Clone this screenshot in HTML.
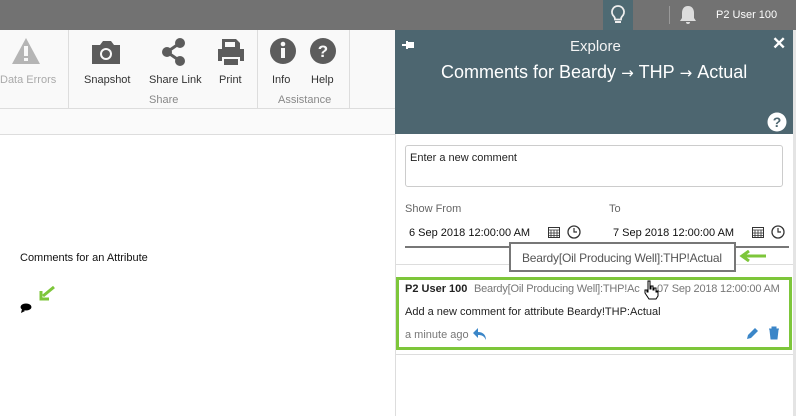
<!DOCTYPE html><html><head><style>
body{margin:0;width:796px;height:416px;overflow:hidden;background:#fff;font-family:"Liberation Sans",sans-serif;position:relative}
.a{position:absolute}
.t{font-size:11px;color:#333}
.ar{font-family:'DejaVu Sans';font-size:15px;margin:0 5px}
</style></head><body>
<div class="a" style="left:0;top:0;width:796px;height:30px;background:#727272"></div>
<div class="a" style="left:603px;top:0;width:30px;height:30px;background:#4e6a73"></div>
<svg class="a" style="left:608px;top:4px" width="20" height="22"><path d="M10 2a6 6 0 0 0-4 10.5c1 1 1 2 1 3h6c0-1 0-2 1-3A6 6 0 0 0 10 2z" fill="none" stroke="#eee" stroke-width="1.8"/><rect x="7" y="17" width="6" height="2" fill="#eee"/></svg>
<div class="a" style="left:669px;top:6px;width:1px;height:18px;background:#999"></div>
<svg class="a" style="left:678px;top:4px" width="20" height="22"><path d="M10 2c-4 0-6 3-6 7v5l-2 3h16l-2-3V9c0-4-2-7-6-7z M8 18h4a2 2 0 0 1-4 0z" fill="#ddd"/></svg>
<div class="a" style="left:716px;top:9px;font-size:11px;color:#fff">P2 User 100</div>
<div class="a" style="left:0;top:30px;width:395px;height:78px;background:#f9f9f9;border-bottom:1px solid #ddd"></div>
<div class="a" style="left:0;top:109px;width:395px;height:25px;background:#fafafa;border-bottom:1px solid #ddd"></div>
<div class="a" style="left:68px;top:30px;width:1px;height:78px;background:#ddd"></div>
<div class="a" style="left:257px;top:30px;width:1px;height:78px;background:#ddd"></div>
<div class="a" style="left:349px;top:30px;width:1px;height:78px;background:#ddd"></div>
<svg class="a" style="left:10px;top:36px" width="32" height="30"><path d="M16 2L30 28H2z" fill="#b5b5b5"/><rect x="14" y="10" width="4" height="10" fill="#f9f9f9"/><rect x="14" y="22" width="4" height="3" fill="#f9f9f9"/></svg>
<div class="a t" style="left:0;top:74px;color:#aaa">Data Errors</div>
<svg class="a" style="left:89px;top:37px" width="34" height="30"><path d="M3 8h8l3-4h8l3 4h6v19H3z" fill="#5c5c5c"/><circle cx="17" cy="17" r="6" fill="#f9f9f9"/><circle cx="17" cy="17" r="4" fill="#5c5c5c"/></svg>
<div class="a t" style="left:84px;top:74px">Snapshot</div>
<svg class="a" style="left:160px;top:37px" width="28" height="30"><circle cx="20" cy="6" r="5" fill="#5c5c5c"/><circle cx="7" cy="15" r="5" fill="#5c5c5c"/><circle cx="20" cy="24" r="5" fill="#5c5c5c"/><path d="M20 6L7 15l13 9" stroke="#5c5c5c" stroke-width="3" fill="none"/></svg>
<div class="a t" style="left:149px;top:74px">Share Link</div>
<svg class="a" style="left:216px;top:37px" width="30" height="30"><path d="M6 2h14l4 4v6H6z M2 12h26v12h-4v-4H6v4H2z M8 22h14v6H8z" fill="#5c5c5c"/><rect x="9" y="5" width="10" height="5" fill="#f9f9f9"/></svg>
<div class="a t" style="left:219px;top:74px">Print</div>
<div class="a t" style="left:149px;top:94px;color:#888">Share</div>
<svg class="a" style="left:269px;top:37px" width="28" height="28"><circle cx="14" cy="14" r="13" fill="#5c5c5c"/><rect x="12" y="11" width="4" height="10" fill="#f9f9f9"/><circle cx="14" cy="7" r="2.3" fill="#f9f9f9"/></svg>
<div class="a t" style="left:272px;top:74px">Info</div>
<svg class="a" style="left:309px;top:37px" width="28" height="28"><circle cx="14" cy="14" r="13" fill="#5c5c5c"/><text x="14" y="20" text-anchor="middle" font-size="17" font-weight="bold" fill="#f9f9f9" font-family="Liberation Sans">?</text></svg>
<div class="a t" style="left:311px;top:74px">Help</div>
<div class="a t" style="left:278px;top:94px;color:#888">Assistance</div>
<div class="a t" style="left:20px;top:252px;color:#111">Comments for an Attribute</div>
<svg class="a" style="left:18px;top:286px" width="40" height="30"><ellipse cx="8" cy="21" rx="5.5" ry="3.5" fill="#000"/><path d="M4 23l-1 4 4-2z" fill="#000"/><path d="M36 1L25 10M23 5v8h8" stroke="#7dc63a" stroke-width="3" fill="none"/></svg>
<div class="a" style="left:395px;top:30px;width:399px;height:104px;background:#4d6670"></div>
<div class="a" style="left:793px;top:30px;width:3px;height:386px;background:#e4e4e4"></div>
<div class="a" style="left:395px;top:134px;width:1px;height:282px;background:#ddd"></div>
<svg class="a" style="left:402px;top:40px" width="14" height="10"><path d="M0 4h4V1h2v8H4V6H0z M6 2h6v6H6z" fill="#fff"/></svg>
<div class="a" style="left:570px;top:38px;font-size:15px;color:#f4f4f4">Explore</div>
<div class="a" style="left:772px;top:34px;font-size:17px;font-weight:bold;color:#fff">✕</div>
<div class="a" style="left:441px;top:62px;font-size:18px;color:#fff;white-space:nowrap">Comments for Beardy<span class="ar">→</span>THP<span class="ar">→</span>Actual</div>
<svg class="a" style="left:767px;top:112px" width="20" height="20"><circle cx="10" cy="10" r="9.5" fill="#fff"/><text x="10" y="15" text-anchor="middle" font-size="14" font-weight="bold" fill="#4d6670" font-family="Liberation Sans">?</text></svg>
<div class="a" style="left:405px;top:145px;height:42px;border:1px solid #ccc;border-radius:3px;font-size:11px;color:#222;padding:6px 0 0 4px;box-sizing:border-box;width:378px">Enter a new comment</div>
<div class="a t" style="left:405px;top:203px;color:#666">Show From</div>
<div class="a t" style="left:609px;top:203px;color:#666">To</div>
<div class="a t" style="left:409px;top:227px;color:#111">6 Sep 2018 12:00:00 AM</div>
<div class="a t" style="left:613px;top:227px;color:#111">7 Sep 2018 12:00:00 AM</div>
<svg class="a" style="left:548px;top:226px" width="12" height="12"><rect x="0.5" y="1.5" width="11" height="10" fill="none" stroke="#333"/><path d="M0 4h12M3 4v7M6 4v7M9 4v7M0 7h12M0 9.5h12" stroke="#333" stroke-width="0.8"/></svg>
<svg class="a" style="left:567px;top:225px" width="14" height="14"><circle cx="7" cy="7" r="6" fill="none" stroke="#333" stroke-width="1.3"/><path d="M7 3v4h3" stroke="#333" stroke-width="1.2" fill="none"/></svg>
<svg class="a" style="left:752px;top:226px" width="12" height="12"><rect x="0.5" y="1.5" width="11" height="10" fill="none" stroke="#333"/><path d="M0 4h12M3 4v7M6 4v7M9 4v7M0 7h12M0 9.5h12" stroke="#333" stroke-width="0.8"/></svg>
<svg class="a" style="left:771px;top:225px" width="14" height="14"><circle cx="7" cy="7" r="6" fill="none" stroke="#333" stroke-width="1.3"/><path d="M7 3v4h3" stroke="#333" stroke-width="1.2" fill="none"/></svg>
<div class="a" style="left:405px;top:246px;width:384px;height:2px;background:#777"></div>
<div class="a" style="left:396px;top:264px;width:397px;height:1px;background:#ddd"></div>
<div class="a" style="left:509px;top:242px;width:227px;height:30px;border:2px solid #777;background:#fff;box-sizing:border-box;font-size:12px;color:#555;padding:7px 0 0 11px;letter-spacing:-0.2px">Beardy[Oil Producing Well]:THP!Actual</div>
<svg class="a" style="left:738px;top:250px" width="30" height="12"><path d="M28 6H6M11 1L4 6l7 5" stroke="#7dc63a" stroke-width="3" fill="none"/></svg>
<div class="a" style="left:396px;top:277px;width:396px;height:73px;border:3px solid #7dc63a;box-sizing:border-box"></div>
<div class="a" style="left:405px;top:283px;font-size:11px;color:#222;white-space:nowrap"><b>P2 User 100</b></div>
<div class="a" style="left:474px;top:283px;font-size:11px;color:#777;white-space:nowrap;letter-spacing:-0.2px">Beardy[Oil Producing Well]:THP!Ac</div>
<div class="a" style="left:657px;top:283px;font-size:11px;color:#777;white-space:nowrap;letter-spacing:-0.2px">07 Sep 2018 12:00:00 AM</div>
<div class="a t" style="left:405px;top:306px;color:#222">Add a new comment for attribute Beardy!THP:Actual</div>
<div class="a t" style="left:405px;top:329px;color:#777">a minute ago</div>
<svg class="a" style="left:472px;top:327px" width="16" height="14"><path d="M6 1L1 6l5 5V8c4 0 6 1 8 5 0-5-3-8-8-8z" fill="#3b86c8"/></svg>
<svg class="a" style="left:745px;top:327px" width="14" height="14"><path d="M2 12l1-4 7-7 3 3-7 7z" fill="#3b86c8"/></svg>
<svg class="a" style="left:768px;top:326px" width="12" height="14"><path d="M1 3h10M4 3V1h4v2M2 4h8l-1 9H3z" fill="#3b86c8" stroke="#3b86c8"/></svg>
<svg class="a" style="left:643px;top:280px" width="16" height="20"><path d="M5 1h2v8h1V6h2v4h1V8h2v4h1v-1h1v5l-2 3H6L2 13V10h2v2h1z" fill="#fff" stroke="#000"/></svg>
<div class="a" style="left:396px;top:354px;width:397px;height:1px;background:#ddd"></div>
</body></html>
